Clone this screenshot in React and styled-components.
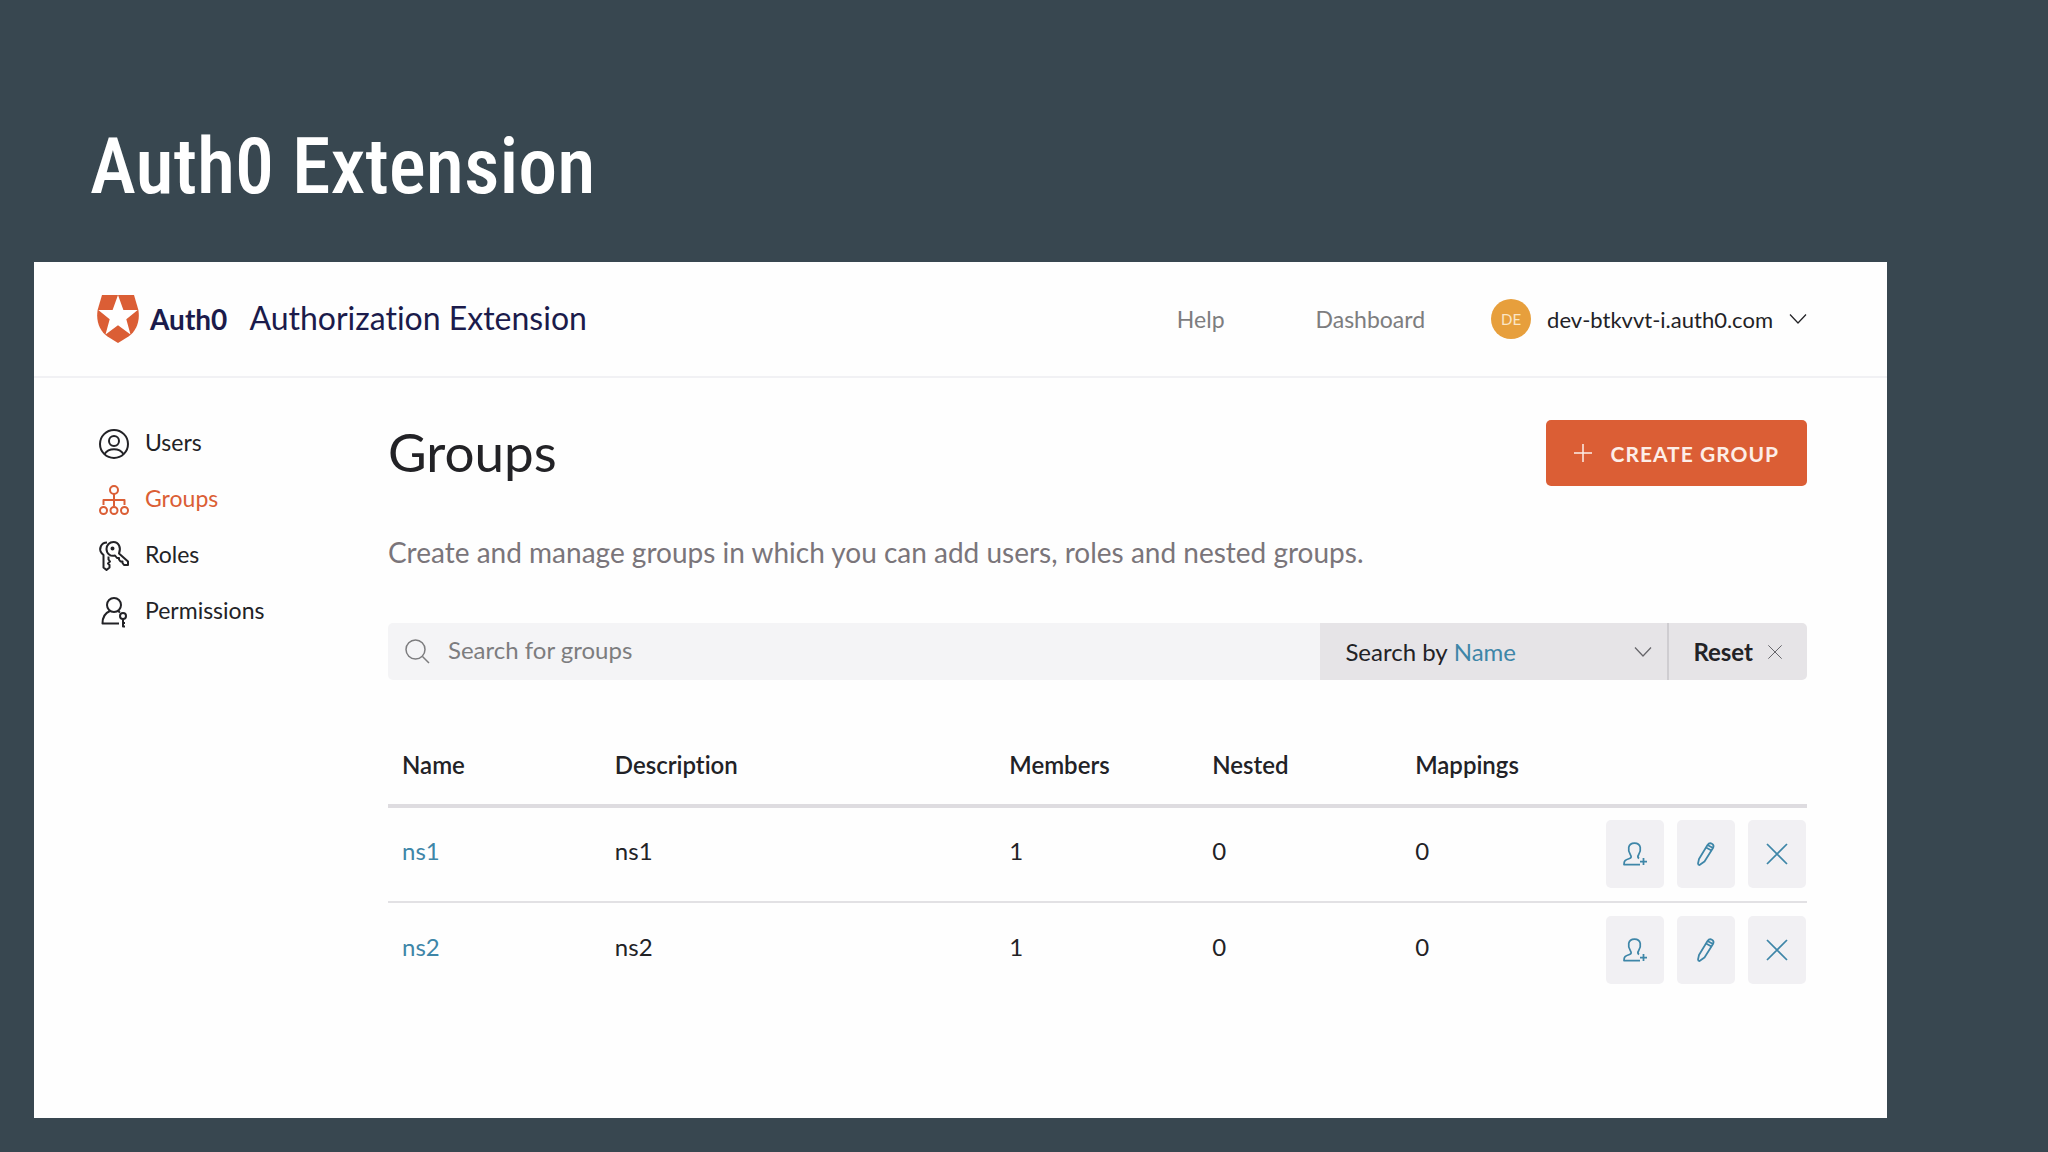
import React from 'react';
import styled, {createGlobalStyle} from "styled-components";

const groups = [
    {name: 'ns1', description: 'ns1', members: 1, nested: 0, mappings: 0},
    {name: 'ns2', description: 'ns2', members: 1, nested: 0, mappings: 0},
];

const Shield = () => (
    <svg width="44" height="48" viewBox="0 0 44 48" aria-hidden="true">
        <path d="M6 0H38L42.400 15C44.200 27 40 36 32.500 41.500L22 48L11.500 41.500C4 36 -.2 27 1.600 15Z" fill="#db5e35"/>
        <path d="M22 0L27.400 15H41.700L30.300 24.300L34.500 39.500L22 30.200L9.500 39.500L13.700 24.300L2.300 15H16.600Z" fill="#fff"/>
    </svg>
);

const UsersIcon = () => (
    <Stroke width="32" height="32" viewBox="0 0 32 32">
        <circle cx="16" cy="16" r="14"/>
        <circle cx="16" cy="13" r="5"/>
        <path d="M6.500 26C9 22.300 12 21.300 16 21.300S23 22.300 25.500 26"/>
    </Stroke>
);

const GroupsIcon = () => (
    <Stroke width="32" height="32" viewBox="0 0 32 32">
        <circle cx="16" cy="6" r="4"/>
        <path d="M16 10V22M5.500 21V16H26.500V21"/>
        <circle cx="5.500" cy="26.500" r="3.500"/>
        <circle cx="16" cy="26.500" r="3.500"/>
        <circle cx="26.500" cy="26.500" r="3.500"/>
    </Stroke>
);

const RolesIcon = () => (
    <Stroke width="32" height="32" viewBox="0 0 32 32">
        <path d="M21 13.500L30 21.500V25H26L24.500 23V21.500H22.500L21 19.500V18H19L17 15.500C12.500 16.800 8.500 13.500 8.500 9C8.500 5 11.500 2 15.500 2C20.500 2 23.500 7.500 21 13.500Z"/>
        <circle cx="14.500" cy="8.500" r="1" fill="currentColor"/>
        <path d="M9 2.500C3 2.500 .5 9 3.500 13L5.500 15V27.500L8.500 30L11.500 27.500V25L10 23.500L12 21.500L10.500 19.500V16.500"/>
    </Stroke>
);

const PermissionsIcon = () => (
    <Stroke width="32" height="32" viewBox="0 0 32 32">
        <circle cx="16" cy="9" r="7"/>
        <path d="M12 15C7 17 4.500 21 4.500 27.500H21M20 15L22 16.500"/>
        <circle cx="25" cy="20" r="3"/>
        <path d="M25 23V30.500H27M25 27H27"/>
    </Stroke>
);

const AddUserIcon = () => (
    <Stroke width="26" height="26" viewBox="0 0 26 26" $line={1.75}>
        <path d="M18 23.500H2C2 19.500 3 19 7.500 17.500C9.500 16.800 9.500 15.500 8.500 14C5.500 9.500 5.500 2 12.500 2S19.500 9.500 16.500 14C15.500 15.500 15.700 16.600 17 17.500M21.500 17V24M18 20.500H25"/>
    </Stroke>
);

const PencilIcon = () => (
    <Stroke width="26" height="26" viewBox="0 0 26 26" $line={1.75}>
        <path d="M6 18L14.500 4C17 .5 22 3 20 7L11.500 20.500L6.500 24Q5 24 5 22.500Z"/>
        <path d="M13 6.500L18.500 9.500M14.500 4L20 7"/>
    </Stroke>
);

const CrossIcon = ({size, line}) => (
    <Stroke width={size} height={size} viewBox="0 0 24 24" $line={line}>
        <path d="M2 2L22 22M22 2L2 22"/>
    </Stroke>
);

const ChevronIcon = () => (
    <Stroke width="18" height="12" viewBox="0 0 18 12" $line={1.25}>
        <path d="M1 1.500L9 10L17 1.500"/>
    </Stroke>
);

const PlusIcon = () => (
    <Stroke width="18" height="18" viewBox="0 0 18 18" $line={1.5}>
        <path d="M9 0V18M0 9H18"/>
    </Stroke>
);

const SearchIcon = () => (
    <Stroke width="25" height="25" viewBox="0 0 25 25" $line={1.5}>
        <circle cx="10.500" cy="10.500" r="9.500"/>
        <path d="M17.500 17.500L24 24"/>
    </Stroke>
);

const navItems = [
    {label: 'Users', Icon: UsersIcon},
    {label: 'Groups', Icon: GroupsIcon, active: true},
    {label: 'Roles', Icon: RolesIcon},
    {label: 'Permissions', Icon: PermissionsIcon},
];

const App = () => {
    return (
        <>
            <GlobalStyle/>
            <Slide>
                <SlideTitle>Auth0 Extension</SlideTitle>
                <Panel>
                    <Header>
                        <Brand>
                            <Shield/>
                            <Wordmark>Auth0</Wordmark>
                            <Product>Authorization Extension</Product>
                        </Brand>
                        <HeaderLink href="#help">Help</HeaderLink>
                        <HeaderLink href="#dashboard">Dashboard</HeaderLink>
                        <Account type="button">
                            <Avatar>DE</Avatar>
                            dev-btkvvt-i.auth0.com
                            <ChevronIcon/>
                        </Account>
                    </Header>

                    <Body>
                        <Nav>
                            {navItems.map(({label, Icon, active}) => (
                                <NavLink key={label} href={`#${label.toLowerCase()}`} $active={active}>
                                    <Icon/>
                                    <NavLabel>{label}</NavLabel>
                                </NavLink>
                            ))}
                        </Nav>

                        <main>
                            <TitleRow>
                                <Heading>Groups</Heading>
                                <CreateButton type="button">
                                    <PlusIcon/>
                                    CREATE GROUP
                                </CreateButton>
                            </TitleRow>
                            <Lead>Create and manage groups in which you can add users, roles and nested groups.</Lead>

                            <SearchBar>
                                <SearchField>
                                    <SearchIcon/>
                                    <SearchInput type="text" placeholder="Search for groups" aria-label="Search for groups"/>
                                </SearchField>
                                <SearchBy>
                                    Search by
                                    <SearchSelect defaultValue="Name">
                                        <option>Name</option>
                                        <option>Description</option>
                                    </SearchSelect>
                                    <ChevronIcon/>
                                </SearchBy>
                                <ResetButton type="button">
                                    Reset
                                    <CrossIcon size={16} line={1.5}/>
                                </ResetButton>
                            </SearchBar>

                            <Table>
                                <thead>
                                    <tr>
                                        <Th $width="15%">Name</Th>
                                        <Th $width="27.8%">Description</Th>
                                        <Th $width="14.3%">Members</Th>
                                        <Th $width="14.3%">Nested</Th>
                                        <Th $width="14.2%">Mappings</Th>
                                        <Th aria-label="Actions"/>
                                    </tr>
                                </thead>
                                <tbody>
                                    {groups.map(group => (
                                        <Row key={group.name}>
                                            <Td><GroupLink href={`#${group.name}`}>{group.name}</GroupLink></Td>
                                            <Td>{group.description}</Td>
                                            <Td>{group.members}</Td>
                                            <Td>{group.nested}</Td>
                                            <Td>{group.mappings}</Td>
                                            <ActionCell>
                                                <Actions>
                                                    <ActionButton type="button" aria-label="Add members"><AddUserIcon/></ActionButton>
                                                    <ActionButton type="button" aria-label="Edit group"><PencilIcon/></ActionButton>
                                                    <ActionButton type="button" aria-label="Delete group"><CrossIcon size={24} line={1.75}/></ActionButton>
                                                </Actions>
                                            </ActionCell>
                                        </Row>
                                    ))}
                                </tbody>
                            </Table>
                        </main>
                    </Body>
                </Panel>
            </Slide>
        </>
    );
};

const GlobalStyle = createGlobalStyle`
*{
  box-sizing: border-box;
}

body{
  margin: 0;
  background: #384750;
  color: #222226;
  font-family: Lato, "Open Sans", sans-serif;
  font-size: 24px;
  font-variant-ligatures: none;
}

h1, h2, p{
  margin: 0;
}

a{
  text-decoration: none;
}

button, input, select{
  font: inherit;
  color: inherit;
  border: 0;
  padding: 0;
  background: none;
}
`;

const Stroke = styled.svg.attrs({'aria-hidden': true})`
flex: none;
fill: none;
stroke: currentColor;
stroke-width: ${props => props.$line || 2};
stroke-linejoin: round;
`;

const Slide = styled.div`
min-height: 100vh;
padding: 112px 161px 34px 34px;
`;

const SlideTitle = styled.h1`
padding-left: 56px;
margin-bottom: 40px;
color: #fff;
font-family: "Roboto Condensed", "Liberation Sans Narrow", sans-serif;
font-size: 78px;
line-height: 110px;
font-weight: 500;
`;

const Panel = styled.div`
padding-bottom: 120px;
background: #fefefe;
`;

const Header = styled.header`
display: flex;
align-items: center;
height: 116px;
padding: 0 80px 0 62px;
border-bottom: 2px solid #f1f1f4;
`;

const Brand = styled.div`
display: flex;
align-items: center;
margin-right: auto;
color: #1b1b4b;
`;

const Wordmark = styled.span`
margin: 0 22px 0 10px;
font-size: 28px;
font-weight: 700;
`;

const Product = styled.span`
padding-bottom: 4px;
font-size: 32px;
`;

const HeaderLink = styled.a`
margin-right: 91px;
color: #7d7d7f;
font-size: 23px;

& + &{
  margin-right: 66px;
}
`;

const Account = styled.button`
display: flex;
align-items: center;
gap: 16px;
font-size: 22px;
`;

const Avatar = styled.span`
width: 40px;
height: 40px;
border-radius: 50%;
background: #e79f3c;
color: #fbe6c6;
font-size: 15px;
line-height: 40px;
text-align: center;
`;

const Body = styled.div`
display: grid;
grid-template-columns: 290px 1fr;
padding: 42px 80px 0 64px;
`;

const Nav = styled.nav`
display: flex;
flex-direction: column;
margin-top: -4px;
`;

const NavLink = styled.a`
display: flex;
align-items: center;
gap: 15px;
height: 56px;
color: ${props => props.$active ? '#db5e35' : '#222226'};
font-size: 23px;
`;

const NavLabel = styled.span`
padding-bottom: 4px;
`;

const TitleRow = styled.div`
display: flex;
align-items: center;
justify-content: space-between;
height: 66px;
`;

const Heading = styled.h2`
padding-bottom: 4px;
font-size: 53px;
font-weight: 400;
`;

const CreateButton = styled.button`
display: flex;
align-items: center;
gap: 19px;
height: 66px;
padding: 0 28px;
border-radius: 5px;
background: #db5e35;
color: #fdeee8;
font-size: 21px;
font-weight: 700;
letter-spacing: 1px;
`;

const Lead = styled.p`
margin: 49px 0 54px;
color: #7a757a;
font-size: 28px;
line-height: 34px;
`;

const SearchBar = styled.div`
display: flex;
height: 57px;
border-radius: 5px;
overflow: hidden;
`;

const SearchField = styled.div`
display: flex;
flex: 1;
align-items: center;
gap: 18px;
padding-left: 17px;
background: #f4f4f6;
color: #7d7d7f;
`;

const SearchInput = styled.input`
flex: 1;
height: 100%;
padding-bottom: 4px;
outline: none;

&::placeholder{
  color: #7d7d7f;
  opacity: 1;
}
`;

const SearchBy = styled.label`
display: flex;
align-items: center;
gap: 6px;
width: 349px;
padding: 0 15px 0 25px;
border-right: 2px solid #cfcdd1;
background: #e6e4e7;

svg{
  color: #66656a;
}
`;

const SearchSelect = styled.select`
flex: 1;
appearance: none;
outline: none;
color: #3e86a8;
`;

const ResetButton = styled.button`
display: flex;
align-items: center;
gap: 14px;
padding: 0 24px;
background: #e6e4e7;
font-weight: 700;

svg{
  color: #66656a;
}
`;

const Table = styled.table`
width: 100%;
margin-top: 58px;
border-collapse: collapse;
table-layout: fixed;
`;

const Th = styled.th`
width: ${props => props.$width || 'auto'};
height: 68px;
padding: 0 14px 14px;
border-bottom: 4px solid #dedce0;
text-align: left;
font-weight: 600;
`;

const Row = styled.tr`
height: 96px;

& + &{
  border-top: 2px solid #e2e1e4;
}
`;

const Td = styled.td`
padding: 0 14px 8px;
`;

const ActionCell = styled.td`
padding: 0 1px 2px 0;
`;

const GroupLink = styled.a`
color: #3e86a8;
`;

const Actions = styled.div`
display: flex;
justify-content: flex-end;
gap: 13px;
`;

const ActionButton = styled.button`
display: flex;
align-items: center;
justify-content: center;
width: 58px;
height: 68px;
border-radius: 5px;
background: #f1f0f3;
color: #3e86a8;
`;

export default App;
